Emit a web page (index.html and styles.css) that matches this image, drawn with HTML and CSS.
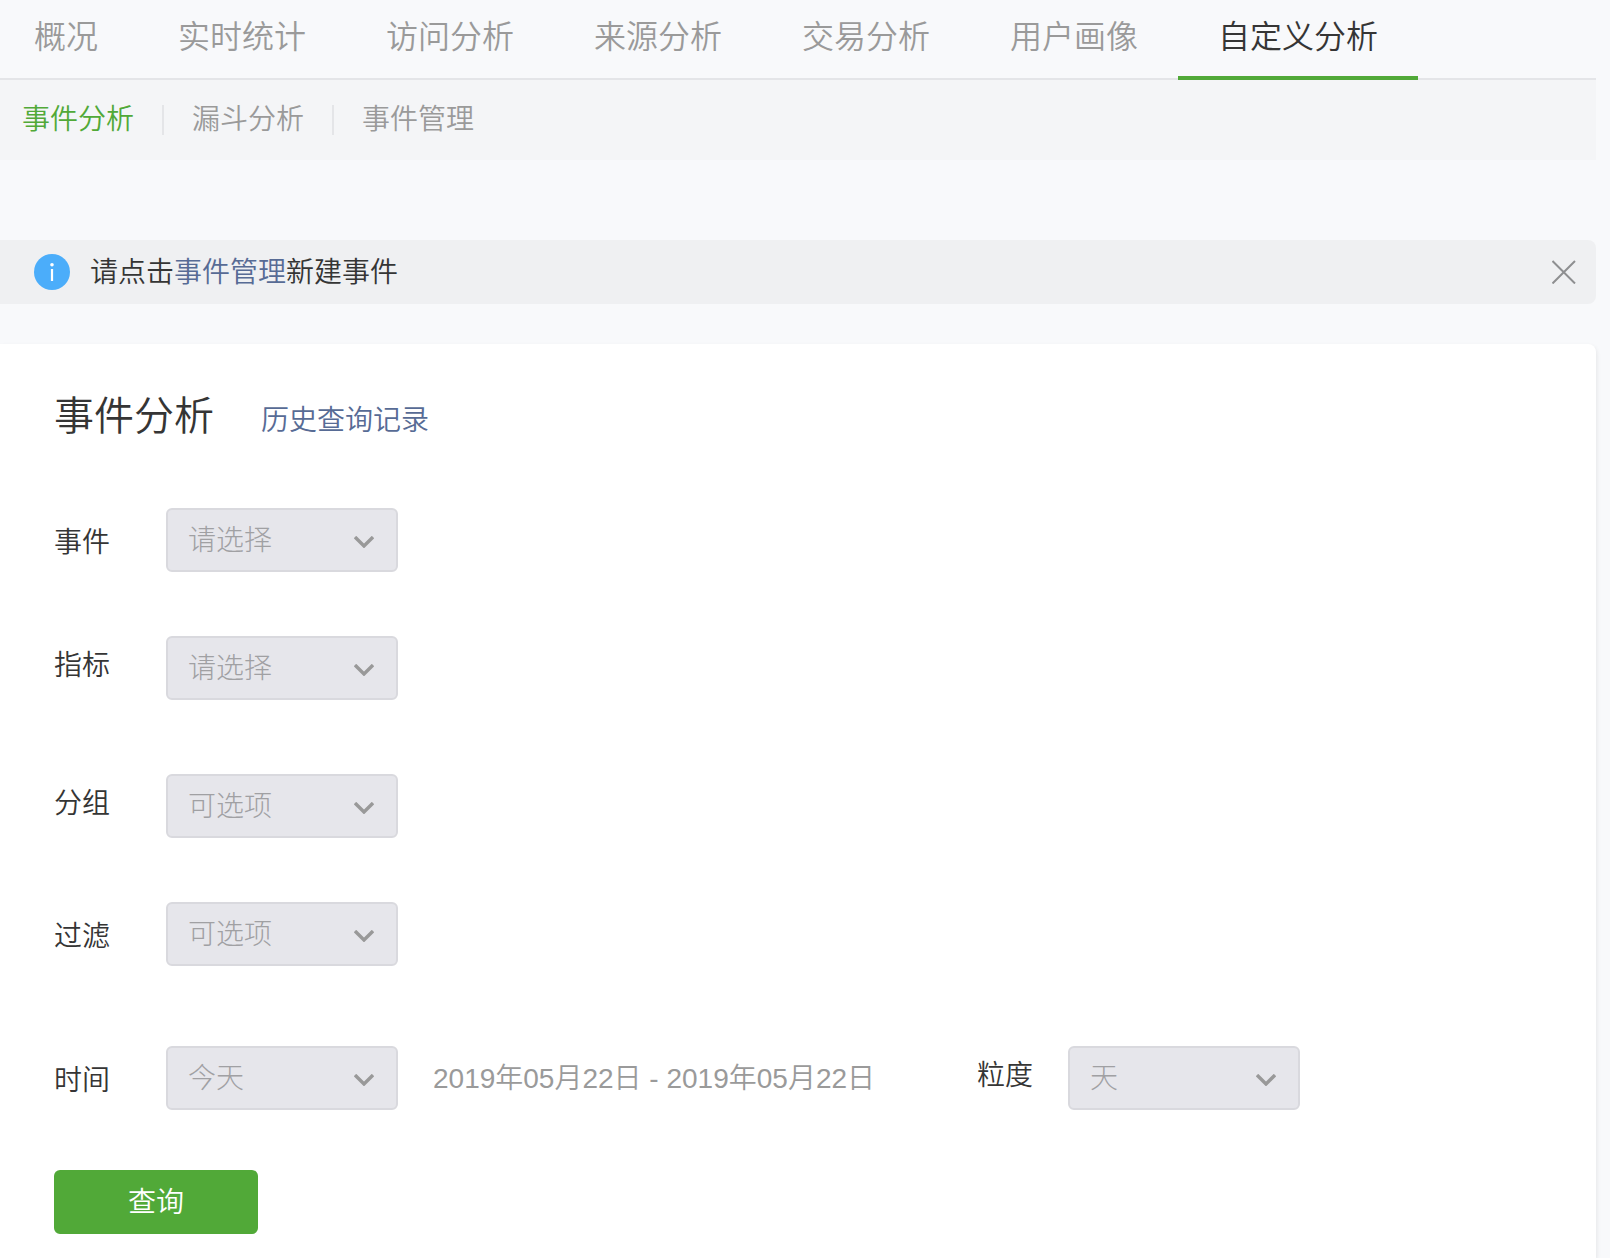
FILE: index.html
```
<!DOCTYPE html>
<html lang="zh-CN">
<head>
    <meta charset="UTF-8">
    <meta name="viewport" content="width=device-width, initial-scale=1.0">
    <title>事件分析</title>
    <link rel="stylesheet" href="styles.css">
</head>
<body>
    <div class="page">

        <nav class="tabs">
            <a href="#">概况</a>
            <a href="#">实时统计</a>
            <a href="#">访问分析</a>
            <a href="#">来源分析</a>
            <a href="#">交易分析</a>
            <a href="#">用户画像</a>
            <a href="#" class="active">自定义分析</a>
        </nav>

        <nav class="subtabs">
            <a href="#" class="active">事件分析</a>
            <a href="#">漏斗分析</a>
            <a href="#">事件管理</a>
        </nav>

        <div class="notice">
            <svg class="notice-icon" viewBox="0 0 36 36" aria-hidden="true">
                <circle cx="18" cy="18" r="18" fill="#4badfa"/>
                <circle cx="18" cy="10.8" r="1.8" fill="#fff"/>
                <rect x="16.9" y="15" width="2.2" height="12" fill="#fff"/>
            </svg>
            <p>请点击<a href="#">事件管理</a>新建事件</p>
            <button type="button" class="close" aria-label="关闭">
                <svg viewBox="0 0 24 24" aria-hidden="true">
                    <path d="M0.5 1L23 23.5M23 1L0.5 23.5" fill="none" stroke="#8e8f91" stroke-width="2"/>
                </svg>
            </button>
        </div>

        <main class="card">
            <div class="card-head">
                <h1>事件分析</h1>
                <a href="#">历史查询记录</a>
            </div>

            <form>
                <div class="group">
                    <div class="field">
                        <label for="event">事件</label>
                        <div class="select">
                            <select id="event" disabled><option>请选择</option></select>
                            <svg viewBox="0 0 20 12" aria-hidden="true"><path d="M1 1L10 10L19 1"/></svg>
                        </div>
                    </div>
                    <div class="field">
                        <label for="metric" class="raised">指标</label>
                        <div class="select">
                            <select id="metric" disabled><option>请选择</option></select>
                            <svg viewBox="0 0 20 12" aria-hidden="true"><path d="M1 1L10 10L19 1"/></svg>
                        </div>
                    </div>
                </div>

                <div class="group">
                    <div class="field">
                        <label for="grouping" class="raised">分组</label>
                        <div class="select">
                            <select id="grouping" disabled><option>可选项</option></select>
                            <svg viewBox="0 0 20 12" aria-hidden="true"><path d="M1 1L10 10L19 1"/></svg>
                        </div>
                    </div>
                    <div class="field">
                        <label for="filter">过滤</label>
                        <div class="select">
                            <select id="filter" disabled><option>可选项</option></select>
                            <svg viewBox="0 0 20 12" aria-hidden="true"><path d="M1 1L10 10L19 1"/></svg>
                        </div>
                    </div>
                </div>

                <div class="time-row">
                    <div class="field">
                        <label for="time">时间</label>
                        <div class="select">
                            <select id="time" disabled><option>今天</option></select>
                            <svg viewBox="0 0 20 12" aria-hidden="true"><path d="M1 1L10 10L19 1"/></svg>
                        </div>
                        <span class="range">2019年05月22日 - 2019年05月22日</span>
                    </div>
                    <div class="field compact">
                        <label for="unit" class="raised">粒度</label>
                        <div class="select">
                            <select id="unit" disabled><option>天</option></select>
                            <svg viewBox="0 0 20 12" aria-hidden="true"><path d="M1 1L10 10L19 1"/></svg>
                        </div>
                    </div>
                </div>

                <button type="submit" class="submit">查询</button>
            </form>
        </main>

    </div>
</body>
</html>
```

FILE: styles.css
```
*{
    box-sizing: border-box;
}
body{
    margin: 0;
    background-color: #f8f9fb;
    color: #353535;
    font-family: "Liberation Sans", "Noto Sans CJK SC", sans-serif;
    font-size: 28px;
    font-weight: 350;
    line-height: 40px;
}
a{
    color: #576b95;
    text-decoration: none;
}
p, h1{
    margin: 0;
    font-weight: 350;
}
svg{
    display: block;
}
.page{
    display: flex;
    flex-direction: column;
    min-height: 100vh;
    padding-right: 14px;
    overflow: hidden;
}

/* navigation */
.tabs{
    display: flex;
    height: 80px;
    border-bottom: 2px solid #e4e5e8;
}
.tabs a{
    height: 80px;
    padding: 17px 40px 0;
    color: #9a9a9a;
    font-size: 32px;
    white-space: nowrap;
}
.tabs a:first-child{
    margin-left: -6px;
}
.tabs .active{
    border-bottom: 4px solid #51a938;
    color: #353535;
}
.subtabs{
    display: flex;
    align-items: center;
    height: 80px;
    background-color: #f4f5f7;
}
.subtabs a{
    padding: 0 28px;
    color: #9a9a9a;
    line-height: 30px;
}
.subtabs a:first-child{
    padding-left: 22px;
}
.subtabs a + a{
    border-left: 2px solid #e4e5e8;
}
.subtabs .active{
    color: #51a938;
}

/* notice */
.notice{
    display: flex;
    align-items: center;
    height: 64px;
    margin-top: 80px;
    padding: 0 20px 0 34px;
    border-radius: 0 8px 8px 0;
    background-color: #eff0f2;
}
.notice p{
    padding-top: 2px;
}
.notice-icon{
    width: 36px;
    height: 36px;
    margin-right: 20px;
}
.close{
    margin-left: auto;
    padding: 0;
    border: 0;
    background: none;
}
.close svg{
    width: 24px;
    height: 24px;
}

/* query card */
.card{
    flex: 1;
    margin-top: 40px;
    padding: 42px 54px 24px;
    border-radius: 0 8px 0 0;
    background-color: #fff;
    box-shadow: 1px 2px 4px rgba(0, 0, 0, 0.08);
}
.card-head{
    display: flex;
    align-items: baseline;
    gap: 47px;
    margin-bottom: 62px;
}
.card-head h1{
    font-size: 40px;
    line-height: 60px;
}
.group{
    display: grid;
    gap: 64px;
    margin-bottom: 74px;
}
.field{
    display: flex;
    align-items: center;
}
.field label{
    width: 112px;
    padding-top: 6px;
}
.field .raised{
    padding: 0 0 4px;
}
.compact label{
    width: 91px;
}
.select{
    position: relative;
    width: 232px;
}
.select select{
    display: block;
    width: 100%;
    height: 64px;
    padding: 2px 56px 0 20px;
    border: 2px solid #d9d9de;
    border-radius: 6px;
    background-color: #e6e6eb;
    color: #a0a0a3;
    font: inherit;
    font-weight: 300;
    opacity: 1;
    appearance: none;
}
.select svg{
    position: absolute;
    top: 28px;
    right: 24px;
    width: 20px;
    height: 12px;
    fill: none;
    stroke: #999;
    stroke-width: 3.4;
}
.range{
    margin-left: 35px;
    padding-top: 2px;
    color: #9a9a9a;
    white-space: nowrap;
}
.time-row{
    display: flex;
    gap: 102px;
    margin: 80px 0 60px;
}
.submit{
    display: block;
    width: 204px;
    height: 64px;
    padding-top: 2px;
    border: 0;
    border-radius: 6px;
    background-color: #51a938;
    color: #fff;
    font: inherit;
}
```
